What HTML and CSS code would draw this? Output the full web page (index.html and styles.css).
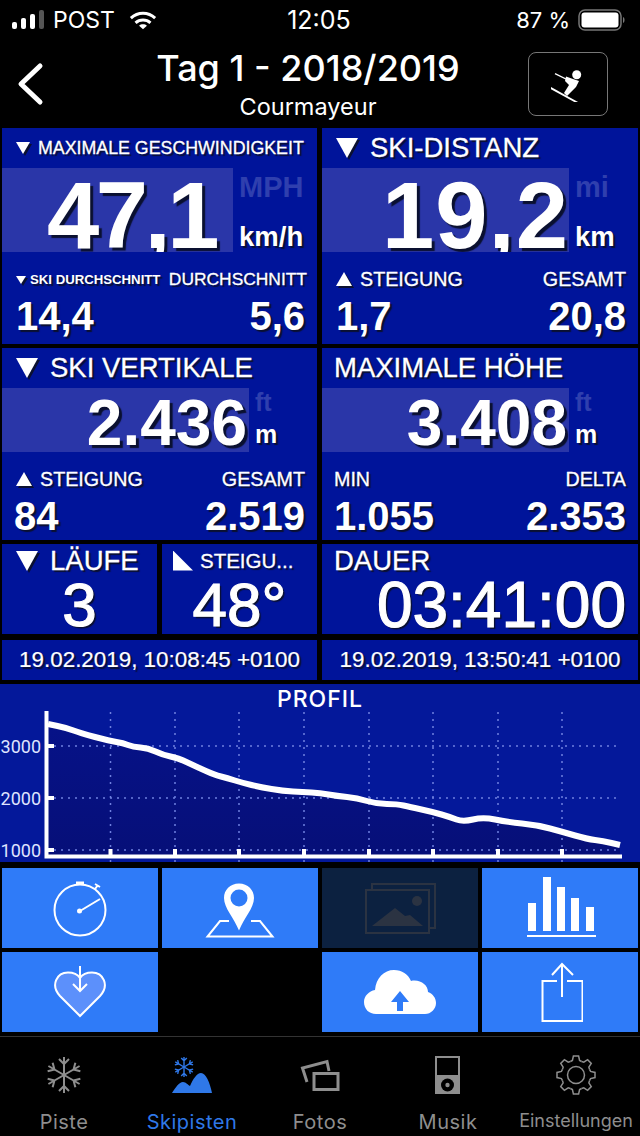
FILE: index.html
```html
<!DOCTYPE html>
<html lang="en">
<head>
  <meta charset="UTF-8" />
  <meta name="viewport" content="width=device-width, initial-scale=1.0"/>
  <title>Tag 1 - 2018/2019</title>
  <link rel="stylesheet" href="styles.css">
</head>
<body>
  <svg class="defs" width="0" height="0">
    <symbol id="flake" viewBox="-20 -20 40 40">
      <g id="arm">
        <path id="arm0" d="M0 0V-18M-5 -16L0 -11L5 -16"/>
        <use href="#arm0" transform="rotate(60)"/>
        <use href="#arm0" transform="rotate(120)"/>
        <use href="#arm0" transform="rotate(180)"/>
        <use href="#arm0" transform="rotate(240)"/>
        <use href="#arm0" transform="rotate(300)"/>
      </g>
    </symbol>
    <path id="tooth" d="M-5.6 -13.5L-3.6 -14.6L-2.6 -19H2.6L3.6 -14.6L5.6 -13.5"/>
  </svg>

  <div class="status">
    <div class="status-left">
      <svg width="34" height="20" viewBox="0 0 34 20"><rect x="0" y="12" width="5" height="7" rx="2" fill="#fff"/><rect x="9" y="8" width="5" height="11" rx="2" fill="#fff"/><rect x="18" y="4" width="5" height="15" rx="2" fill="#fff"/><rect x="27" y="0" width="5" height="19" rx="2" fill="#555"/></svg>
      <span>POST</span>
      <svg width="28" height="19" viewBox="0 0 30 20" fill="none" stroke="#fff" stroke-width="3.2"><path d="M2 7.5C9.500 0.500 20.500 0.500 28 7.500"/><path d="M7 12.500C11.500 8.500 18.500 8.500 23 12.500"/><path d="M15 19.500L10.800 15.500C13 13.700 17 13.700 19.200 15.500Z" fill="#fff" stroke="none"/></svg>
    </div>
    <div class="status-time">12:05</div>
    <div class="status-right">
      <span>87 %</span>
      <svg width="48" height="22" viewBox="0 0 48 22"><rect x="1" y="1" width="42" height="20" rx="6" fill="none" stroke="#777" stroke-width="1.500"/><rect x="3.500" y="3.500" width="37" height="15" rx="3" fill="#fff"/><path d="M45 8C47 8.500 47 13.500 45 14Z" fill="#777"/></svg>
    </div>
  </div>

  <div class="nav">
    <svg class="back" width="28" height="44" viewBox="0 0 28 44" fill="none" stroke="#fff" stroke-width="5" stroke-linecap="round" stroke-linejoin="round"><path d="M24 4L5 22L24 40"/></svg>
    <div class="nav-title">
      <div class="title">Tag 1 - 2018/2019</div>
      <div class="subtitle">Courmayeur</div>
    </div>
    <div class="ski-btn">
      <svg width="34" height="36" viewBox="551 66 34 36" fill="#fff"><circle cx="576.700" cy="74.700" r="4.500"/><path d="M555 73.700L572 82" stroke="#fff" stroke-width="1.300"/><path d="M566 76.500L573 79L579 81L576 87L567 96L564 93L569 85L565 81Z"/><path d="M549 87L578 103" stroke="#fff" stroke-width="1.800"/></svg>
    </div>
  </div>

  <div class="stats">
    <div class="row">
      <div class="card tall">
        <div class="head small"><i class="tri down"></i>MAXIMALE GESCHWINDIGKEIT</div>
        <div class="main big">
          <div class="hl speed">47,1</div>
          <div class="units"><span class="off">MPH</span><span>km/h</span></div>
        </div>
        <div class="labels">
          <span class="tiny"><i class="tri down mini"></i>SKI DURCHSCHNITT</span>
          <span class="narrow">DURCHSCHNITT</span>
        </div>
        <div class="values"><span>14,4</span><span>5,6</span></div>
      </div>
      <div class="card tall">
        <div class="head"><i class="tri down"></i>SKI-DISTANZ</div>
        <div class="main big">
          <div class="hl wide spaced">19,2</div>
          <div class="units"><span class="off">mi</span><span>km</span></div>
        </div>
        <div class="labels">
          <span><i class="tri up"></i>STEIGUNG</span>
          <span>GESAMT</span>
        </div>
        <div class="values"><span>1,7</span><span>20,8</span></div>
      </div>
    </div>

    <div class="row">
      <div class="card mid">
        <div class="head"><i class="tri down"></i>SKI VERTIKALE</div>
        <div class="main medium">
          <div class="hl wide">2.436</div>
          <div class="units"><span class="off">ft</span><span>m</span></div>
        </div>
        <div class="labels">
          <span><i class="tri up"></i>STEIGUNG</span>
          <span>GESAMT</span>
        </div>
        <div class="values"><span>84</span><span>2.519</span></div>
      </div>
      <div class="card mid flush">
        <div class="head">MAXIMALE HÖHE</div>
        <div class="main medium">
          <div class="hl wide">3.408</div>
          <div class="units"><span class="off">ft</span><span>m</span></div>
        </div>
        <div class="labels">
          <span>MIN</span>
          <span>DELTA</span>
        </div>
        <div class="values"><span>1.055</span><span>2.353</span></div>
      </div>
    </div>

    <div class="row short">
      <div class="pair">
        <div class="card">
          <div class="head tight"><i class="tri down"></i>LÄUFE</div>
          <div class="count">3</div>
        </div>
        <div class="card">
          <div class="head tight small-head"><i class="slope"></i>STEIGU...</div>
          <div class="count">48°</div>
        </div>
      </div>
      <div class="card flush">
        <div class="head tight">DAUER</div>
        <div class="count right">03:41:00</div>
      </div>
    </div>

    <div class="row dates">
      <div class="card date">19.02.2019, 10:08:45 +0100</div>
      <div class="card date">19.02.2019, 13:50:41 +0100</div>
    </div>
  </div>

  <div class="chart">
    <div class="chart-title">PROFIL</div>
    <svg width="640" height="152" viewBox="0 710 640 152">
      <path d="M48 724L57.500 726Q67 728 73.500 730.500Q80 733 95 737Q110 741 116.500 742Q123 743 128 745Q133 747 140.500 747.500Q148 748 155.500 751.500Q163 755 170.500 756.500Q178 758 187.500 762.500Q197 767 206 771Q215 775 221 776.500Q227 778 235 780.500Q243 783 251.500 785Q260 787 271.500 789Q283 791 293 791.500Q303 792 311.500 792.500Q320 793 328.500 794.500Q337 796 347 797Q357 798 367 801Q377 804 387 804Q397 804 403.500 805.500Q410 807 421.500 809.500Q433 812 441.500 814.500Q450 817 456.500 819.500Q463 822 473 819.500Q483 817 495 819.500Q507 822 522 823.500Q537 825 550 828.500Q563 832 575 835.500Q587 839 595 840Q603 841 611.500 843L620 845V856H48Z" fill="url(#area)"/>
      <defs>
        <linearGradient id="area" x1="0" y1="0" x2="0" y2="1">
          <stop offset="0" stop-color="#061288"/>
          <stop offset="1" stop-color="#060f78"/>
        </linearGradient>
      </defs>
      <g class="grid-lines">
        <path d="M54 746H620M54 798H620M54 850H620"/>
        <path d="M110.500 712V855M175 712V855M239 712V855M304 712V855M369 712V855M433 712V855M498 712V855M562 712V855"/>
        <path d="M110.500 860V862M175 860V862M239 860V862M304 860V862M369 860V862M433 860V862M498 860V862M562 860V862"/>
      </g>
      <g class="axis-labels">
        <text x="41" y="752.500">3000</text>
        <text x="41" y="804.500">2000</text>
        <text x="41" y="856.500">1000</text>
      </g>
      <path d="M48 724L57.500 726Q67 728 73.500 730.500Q80 733 95 737Q110 741 116.500 742Q123 743 128 745Q133 747 140.500 747.500Q148 748 155.500 751.500Q163 755 170.500 756.500Q178 758 187.500 762.500Q197 767 206 771Q215 775 221 776.500Q227 778 235 780.500Q243 783 251.500 785Q260 787 271.500 789Q283 791 293 791.500Q303 792 311.500 792.500Q320 793 328.500 794.500Q337 796 347 797Q357 798 367 801Q377 804 387 804Q397 804 403.500 805.500Q410 807 421.500 809.500Q433 812 441.500 814.500Q450 817 456.500 819.500Q463 822 473 819.500Q483 817 495 819.500Q507 822 522 823.500Q537 825 550 828.500Q563 832 575 835.500Q587 839 595 840Q603 841 611.500 843L620 845" fill="none" stroke="#fff" stroke-width="6" stroke-linejoin="round"/>
      <path d="M46.500 711V858.500M44.500 856.500H622" fill="none" stroke="#fff" stroke-width="4"/>
      <path d="M48 746H54M48 798H54M48 850H54M110.500 856V849M175 856V849M239 856V849M304 856V849M369 856V849M433 856V849M498 856V849M562 856V849" stroke="#fff" stroke-width="4" fill="none"/>
    </svg>
  </div>

  <div class="buttons">
    <div class="btn">
      <svg width="64" height="66" viewBox="48 875 64 66" fill="none" stroke="#fff" stroke-width="2"><circle cx="80" cy="910" r="25.500"/><path d="M76 883H84" stroke-width="3"/><path d="M95 889L98 885M95 884L100 887"/><path d="M80 911L100 899"/><circle cx="79.500" cy="911" r="2.500" fill="#fff" stroke="none"/></svg>
    </div>
    <div class="btn">
      <svg width="72" height="62" viewBox="204 877 72 62"><path d="M239 883.500C230 883.500 224 890 224 898C224 908 234 918 239 930.500C244 918 254 908 254 898C254 890 248 883.500 239 883.500Z" fill="#fff"/><circle cx="239" cy="898" r="8.500" fill="#2f7bf8"/><path d="M229 921H220L207.500 936.500H272.500L260 921H251" fill="none" stroke="#fff" stroke-width="2"/></svg>
    </div>
    <div class="btn dim">
      <svg width="74" height="54" viewBox="363 881 74 54" fill="none" stroke="#2b3342" stroke-width="2"><path d="M372 889V884H435V928H429"/><rect x="366" y="890" width="63" height="43"/><circle cx="417" cy="901" r="5" fill="#2b3342" stroke="none"/><path d="M372 926L395 908L405 916L410 915L423 926Z" fill="#2b3342" stroke="none"/></svg>
    </div>
    <div class="btn">
      <svg width="72" height="64" viewBox="524 876 72 64" fill="#fff"><rect x="528" y="903" width="8" height="28"/><rect x="543" y="877" width="8" height="54"/><rect x="557" y="887" width="8" height="44"/><rect x="571" y="898" width="8" height="33"/><rect x="586" y="907" width="8" height="24"/><rect x="527" y="935" width="69" height="2"/></svg>
    </div>
    <div class="btn">
      <svg width="56" height="54" viewBox="52 965 56 54" fill="none" stroke="#fff" stroke-width="2"><path d="M80 1016L60 996C50 985 57 972.500 68 972.500C74 972.500 78 975 80 978C82 975 86 972.500 92 972.500C103 972.500 110 985 100 996Z" fill="#5c90fb"/><path d="M80 966V991M73 984L80 991L87 984"/></svg>
    </div>
    <div class="btn empty"></div>
    <div class="btn">
      <svg width="74" height="46" viewBox="363 969 74 46"><path d="M376 1014C369 1014 364 1009 364 1002C364 996 369 991 375 990C376 978 384 970 394 970C402 970 408 974 411 981C420 979 428 985 428 992C433 994 436 998 436 1003C436 1009 431 1014 425 1014Z" fill="#fff"/><path d="M400 991L409 1002H403V1011H397V1002H391Z" fill="#2f7bf8"/></svg>
    </div>
    <div class="btn">
      <svg width="46" height="62" viewBox="537 961 46 62" fill="none" stroke="#fff" stroke-width="2"><path d="M557 981H542.500V1021H582.500V981H567"/><path d="M562 997V964M552 975L562 964L573 975"/></svg>
    </div>
  </div>

  <div class="tabbar">
    <div class="tab">
      <svg class="tab-icon gray-line" width="40" height="40" viewBox="-20 -20 40 40"><use href="#arm"/></svg>
      <span>Piste</span>
    </div>
    <div class="tab active">
      <svg class="tab-icon" width="44" height="40" viewBox="170 1056 44 40"><g class="blue-line" transform="translate(184 1068) scale(.56)"><use href="#arm"/></g><path d="M172 1094C176 1088 179 1083 183 1083C186 1083 188 1086 190 1087C193 1080 197 1074 201 1074C206 1074 210 1084 212 1094Z" fill="#2f78e8"/></svg>
      <span>Skipisten</span>
    </div>
    <div class="tab">
      <svg class="tab-icon" width="40" height="40" viewBox="300 1056 40 40" fill="none" stroke="#8e8e8e" stroke-width="3"><path d="M307 1083L302.500 1069L327 1062.500L329 1072"/><rect x="314" y="1074.500" width="24" height="16"/></svg>
      <span>Fotos</span>
    </div>
    <div class="tab">
      <svg class="tab-icon" width="26" height="40" viewBox="435 1056 26 40"><rect x="435" y="1057" width="25" height="38" fill="#8e8e8e"/><rect x="437" y="1059" width="21" height="17" fill="#000"/><circle cx="447.500" cy="1086" r="6.500" fill="#000"/><circle cx="447.500" cy="1086" r="2.200" fill="#8e8e8e"/></svg>
      <span>Musik</span>
    </div>
    <div class="tab fit">
      <svg class="tab-icon" width="40" height="40" viewBox="-20 -20 40 40" fill="none" stroke="#8e8e8e" stroke-width="1.500">
        <use href="#tooth"/>
        <use href="#tooth" transform="rotate(45)"/>
        <use href="#tooth" transform="rotate(90)"/>
        <use href="#tooth" transform="rotate(135)"/>
        <use href="#tooth" transform="rotate(180)"/>
        <use href="#tooth" transform="rotate(225)"/>
        <use href="#tooth" transform="rotate(270)"/>
        <use href="#tooth" transform="rotate(315)"/>
        <circle r="8.500"/>
      </svg>
      <span>Einstellungen</span>
    </div>
  </div>
</body>
</html>
```

FILE: styles.css
```css
* {
  box-sizing: border-box;
}
body {
  margin: 0;
  width: 640px;
  height: 1136px;
  overflow: hidden;
  background: #000;
  color: #fff;
  font-family: "Liberation Sans", Arial, sans-serif;
}
.defs {
  display: block;
  height: 0;
}

/* status bar */
.status {
  height: 40px;
  display: grid;
  grid-template-columns: 1fr auto 1fr;
  align-items: center;
  padding: 0 14px 0 12px;
  font-family: Inter, sans-serif;
  font-size: 22px;
}
.status-left {
  display: flex;
  align-items: center;
  gap: 7px;
}
.status-left span {
  font-size: 23px;
  margin-right: 7px;
}
.status-time {
  font-size: 25px;
}
.status-right {
  display: flex;
  justify-content: flex-end;
  align-items: center;
  gap: 8px;
}

/* nav */
.nav {
  height: 88px;
  display: grid;
  grid-template-columns: 96px 424px 120px;
  align-items: start;
}
.back {
  margin: 22px 0 0 16px;
}
.nav-title {
  text-align: center;
}
.title {
  font-family: Inter, sans-serif;
  font-weight: 500;
  font-size: 36px;
  line-height: 44px;
  margin-top: 6px;
}
.subtitle {
  font-family: Inter, sans-serif;
  font-size: 23.500px;
  line-height: 28px;
  margin-top: 3px;
}
.ski-btn {
  width: 80px;
  height: 64px;
  margin: 12px 0 0 8px;
  border: 1px solid #777;
  border-radius: 8px;
  display: flex;
  align-items: center;
  justify-content: center;
}

/* stat cards */
.stats {
  display: flex;
  flex-direction: column;
  gap: 4px;
  padding: 0 2px;
  margin-bottom: 4px;
}
.row {
  display: grid;
  grid-template-columns: 315px 316px;
  gap: 5px;
}
.row.short {
  height: 90px;
  margin-bottom: 2px;
}
.row.dates {
  height: 40px;
}
.card {
  background: #00149a;
  text-shadow: 2px 2px 1px #0a1030;
  min-width: 0;
}
.card.tall {
  height: 216px;
}
.card.mid {
  height: 192px;
}
.pair {
  display: grid;
  grid-template-columns: 155px 155px;
  gap: 5px;
}
.head {
  height: 40px;
  display: flex;
  align-items: center;
  padding-left: 14px;
  font-size: 27.500px;
  white-space: nowrap;
  -webkit-text-stroke: 0.3px #fff;
}
.head.small {
  font-size: 17.800px;
}
.head.tight {
  height: 33px;
}
.head.small-head {
  font-size: 20.500px;
}
.tri {
  display: inline-block;
  width: 0;
  height: 0;
  margin-right: 12px;
  border-left: 11px solid transparent;
  border-right: 11px solid transparent;
  filter: drop-shadow(2px 2px 0 #0a1030);
}
.tri.down {
  border-top: 20px solid #fff;
}
.tri.up {
  border-bottom: 14px solid #fff;
  border-left-width: 8px;
  border-right-width: 8px;
  margin-right: 8px;
}
.small .tri.down {
  border-top-width: 12px;
  border-left-width: 7px;
  border-right-width: 7px;
  margin-right: 8px;
}
.tri.mini {
  border-top-width: 8px;
  border-left-width: 5px;
  border-right-width: 5px;
  margin-right: 4px;
}
.slope {
  display: inline-block;
  width: 20px;
  height: 20px;
  margin: 0 7px 0 -3px;
  background: #fff;
  clip-path: polygon(0 0, 100% 100%, 0 100%);
}
.main {
  display: flex;
}
.main.big {
  height: 84px;
}
.main.medium {
  height: 64px;
}
.hl {
  background: #2a36a8;
  text-align: right;
  font-weight: bold;
  white-space: nowrap;
}
.speed {
  width: 231px;
  padding-right: 17px;
  letter-spacing: -3.500px;
}
.wide {
  width: 247px;
  padding-right: 2px;
}
.spaced {
  padding-right: 0;
  letter-spacing: 1px;
}
.big .hl {
  overflow: hidden;
  font-size: 94px;
  line-height: 96px;
  text-shadow: 3px 3px 1px #0a1030;
}
.medium .hl {
  font-size: 64px;
  line-height: 70px;
  text-shadow: 3px 3px 1px #0a1030;
}
.units {
  flex: 1;
  padding-left: 6px;
  display: flex;
  flex-direction: column;
  justify-content: space-between;
  font-weight: bold;
  font-size: 27.500px;
  line-height: 34px;
}
.big .units {
  padding-top: 2px;
  margin-bottom: -2px;
}
.big .off {
  font-size: 29px;
}
.medium .units {
  font-size: 25px;
  line-height: 30px;
  margin-top: -1px;
  margin-bottom: 3px;
}
.off {
  color: #2f3fae;
  text-shadow: none;
}
.labels {
  display: flex;
  justify-content: space-between;
  align-items: center;
  padding: 0 12px 0 14px;
  margin-top: 14px;
  height: 26px;
  font-size: 19.700px;
  white-space: nowrap;
  -webkit-text-stroke: 0.3px #fff;
}
.labels .tiny {
  font-size: 13.200px;
  font-weight: bold;
  -webkit-text-stroke: 0;
}
.labels .narrow {
  font-size: 17.400px;
  margin-right: -2px;
}
.values {
  display: flex;
  justify-content: space-between;
  padding: 0 12px 0 14px;
  font-size: 40px;
  font-weight: bold;
  line-height: 48px;
}
.mid .values {
  padding-left: 12px;
}
.flush .head,
.flush .labels,
.flush .values {
  padding-left: 12px;
}
.count {
  text-align: center;
  font-size: 62px;
  line-height: 56px;
  -webkit-text-stroke: 1.2px #fff;
}
.count.right {
  text-align: right;
  padding-right: 12px;
  font-size: 64px;
}
.date {
  display: flex;
  align-items: center;
  justify-content: center;
  font-size: 22.400px;
  -webkit-text-stroke: 0.2px #fff;
}

/* chart */
.chart {
  height: 178px;
  background: #04189a;
}
.chart svg {
  display: block;
}
.chart-title {
  height: 26px;
  padding-top: 4px;
  line-height: 22px;
  text-align: center;
  font-family: Inter, sans-serif;
  font-size: 23px;
  font-weight: 500;
  letter-spacing: 1px;
}
.grid-lines path {
  fill: none;
  stroke: #6f80e0;
  stroke-width: 1.500;
  stroke-dasharray: 2 5;
}
.axis-labels text {
  fill: #dfe4ff;
  font-family: Roboto, sans-serif;
  font-size: 18px;
  text-anchor: end;
}

/* button grid */
.buttons {
  display: grid;
  grid-template-columns: repeat(4, 156px);
  grid-auto-rows: 80px;
  gap: 4px;
  padding: 6px 2px 0;
}
.btn {
  background: #2f7bf8;
  display: flex;
  align-items: center;
  justify-content: center;
}
.btn.dim {
  background: #0c2140;
}
.btn.empty {
  background: none;
}

/* tab bar */
.tabbar {
  height: 100px;
  margin-top: 4px;
  border-top: 1px solid #333;
  display: grid;
  grid-template-columns: repeat(5, 128px);
  font-family: Inter, sans-serif;
  font-size: 20px;
  letter-spacing: 0.5px;
  color: #8e8e8e;
}
.tab {
  display: flex;
  flex-direction: column;
  align-items: center;
  white-space: nowrap;
}
.tab.fit {
  font-size: 18px;
  letter-spacing: 0;
}
.tab-icon {
  margin-top: 18px;
  height: 40px;
  margin-bottom: 15px;
}
.tab.active {
  color: #2f78e8;
}
.gray-line use {
  fill: none;
  stroke: #8e8e8e;
  stroke-width: 2;
}
.blue-line use {
  fill: none;
  stroke: #2f78e8;
  stroke-width: 2.500;
}
```
